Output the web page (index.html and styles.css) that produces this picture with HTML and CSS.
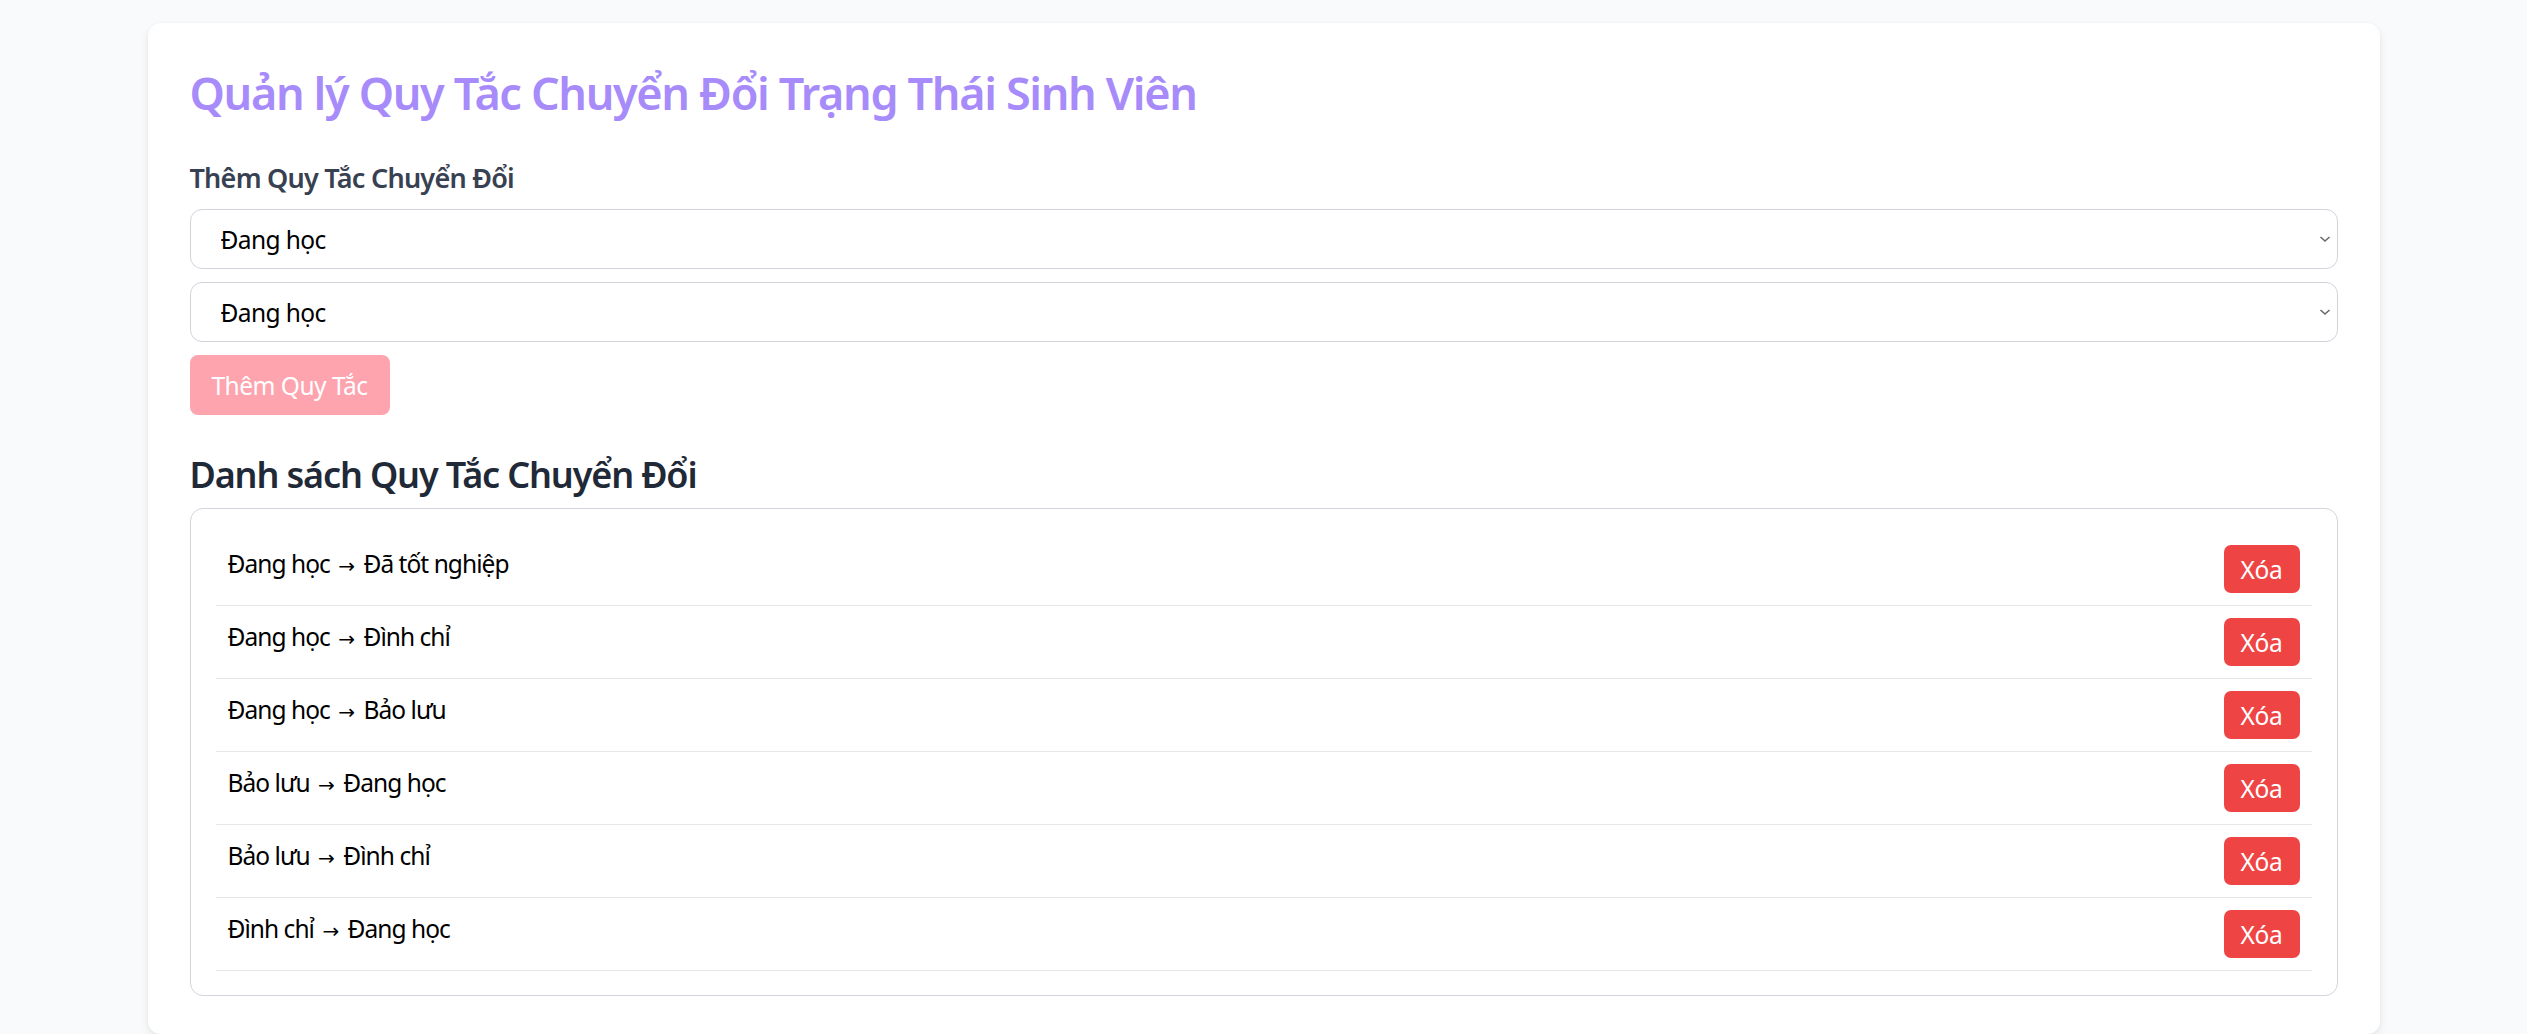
FILE: index.html
```html
<!DOCTYPE html>
<html lang="vi">
<head>
<meta charset="utf-8">
<title>Quản lý Quy Tắc Chuyển Đổi Trạng Thái Sinh Viên</title>
<link rel="stylesheet" href="styles.css">
</head>
<body>
<main class="card">
  <h1 class="title">Quản lý Quy Tắc Chuyển Đổi Trạng Thái Sinh Viên</h1>
  <section class="add">
    <h3 class="label">Thêm Quy Tắc Chuyển Đổi</h3>
    <div class="select-wrap">
      <select class="select"><option>Đang học</option></select>
      <svg class="chev" width="12" height="8" viewBox="0 0 12 8"><path d="M1.5 2 L6 6 L10.5 2" fill="none" stroke="#6b6b6b" stroke-width="1.6"/></svg>
    </div>
    <div class="select-wrap">
      <select class="select"><option>Đang học</option></select>
      <svg class="chev" width="12" height="8" viewBox="0 0 12 8"><path d="M1.5 2 L6 6 L10.5 2" fill="none" stroke="#6b6b6b" stroke-width="1.6"/></svg>
    </div>
    <button class="btn-add" disabled>Thêm Quy Tắc</button>
  </section>
  <h2 class="subtitle">Danh sách Quy Tắc Chuyển Đổi</h2>
  <ul class="list">
    <li class="row"><span class="rule">Đang học <span class="arrow">→</span> Đã tốt nghiệp</span><button class="btn-del">Xóa</button></li>
    <li class="row"><span class="rule">Đang học <span class="arrow">→</span> Đình chỉ</span><button class="btn-del">Xóa</button></li>
    <li class="row"><span class="rule">Đang học <span class="arrow">→</span> Bảo lưu</span><button class="btn-del">Xóa</button></li>
    <li class="row"><span class="rule">Bảo lưu <span class="arrow">→</span> Đang học</span><button class="btn-del">Xóa</button></li>
    <li class="row"><span class="rule">Bảo lưu <span class="arrow">→</span> Đình chỉ</span><button class="btn-del">Xóa</button></li>
    <li class="row"><span class="rule">Đình chỉ <span class="arrow">→</span> Đang học</span><button class="btn-del">Xóa</button></li>
  </ul>
</main>
</body>
</html>
```

FILE: styles.css
```css
* { box-sizing: border-box; }

html, body {
  margin: 0;
  padding: 0;
  background: #f9fafb;
  font-family: "Noto Sans", "Open Sans", sans-serif;
}

body {
  padding-top: 23px;
}

.card {
  width: 2232px;
  margin: 0 auto;
  background: #ffffff;
  border-radius: 13px;
  box-shadow: 0 4px 10px rgba(0, 0, 0, 0.07), 0 1px 4px rgba(0, 0, 0, 0.04);
  padding: 41px 42px 38px;
}

.title {
  margin: 0 0 33px;
  font-size: 45px;
  line-height: 58px;
  font-weight: 600;
  color: #a78bfa;
  letter-spacing: -1.35px;
}

.add {
  display: flex;
  flex-direction: column;
  align-items: flex-start;
}

.label {
  margin: 0 0 9px;
  font-size: 27px;
  line-height: 45px;
  font-weight: 600;
  color: #374151;
  letter-spacing: -0.75px;
}

.select-wrap {
  position: relative;
  width: 100%;
  margin-bottom: 13px;
}

.select {
  display: block;
  width: 100%;
  height: 60px;
  padding: 0 40px 0 30px;
  border: 1px solid #d1d5db;
  border-radius: 12px;
  background: #ffffff;
  font-family: inherit;
  font-size: 24.5px;
  letter-spacing: -0.6px;
  color: #000000;
  -webkit-appearance: none;
  appearance: none;
  outline: none;
}

.chev {
  position: absolute;
  right: 7px;
  top: 26px;
  pointer-events: none;
}

.btn-add {
  width: 200px;
  height: 60px;
  border: none;
  border-radius: 8px;
  background: #fda4af;
  color: #ffffff;
  font-family: inherit;
  font-size: 24.5px;
  letter-spacing: -0.5px;
  padding: 0;
}

.subtitle {
  margin: 34px 0 8px;
  font-size: 36px;
  line-height: 51px;
  font-weight: 600;
  color: #1f2937;
  letter-spacing: -1.15px;
}

.list {
  list-style: none;
  margin: 0;
  padding: 24px 25px;
  border: 1px solid #d4d5dc;
  border-radius: 13px;
}

.row {
  display: flex;
  justify-content: space-between;
  align-items: flex-start;
  padding: 12px 12px;
  border-bottom: 1px solid #e5e7eb;
  height: 73px;
}

.rule {
  font-size: 24.5px;
  line-height: 38px;
  color: #000000;
  letter-spacing: -0.95px;
}

.arrow {
  display: inline-block;
  margin: 0 3px;
  font-family: "DejaVu Sans", sans-serif;
  font-size: 20px;
  letter-spacing: 0;
}

.btn-del {
  width: 76px;
  height: 48px;
  border: none;
  border-radius: 7px;
  background: #ef4444;
  color: #ffffff;
  font-family: inherit;
  font-size: 24.5px;
  letter-spacing: -0.3px;
  padding: 0;
}
```
